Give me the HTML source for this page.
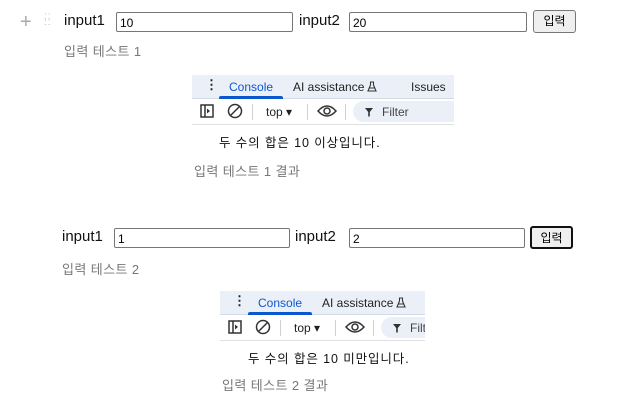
<!DOCTYPE html>
<html><head><meta charset="utf-8"><style>
*{margin:0;padding:0;box-sizing:border-box}
body{width:634px;height:403px;background:#fff;position:relative;overflow:hidden;font-family:"Liberation Sans","Noto Sans CJK KR",sans-serif}
.a{position:absolute;white-space:nowrap}
.lbl{font-size:15px;color:#111}
.inp{position:absolute;border:1px solid #767676;border-radius:2px;height:20px;font-size:12px;padding:3px 3px;color:#000}
.btn{position:absolute;border:1px solid #767676;border-radius:3px;background:#efefef;font-size:12px;text-align:center;line-height:21px;height:23px;width:43px}
.gray{font-size:13px;color:#777;letter-spacing:0.4px}
.dt{position:absolute;overflow:hidden;font-size:12px;color:#1f1f1f}
.tabs{position:absolute;left:0;top:0;right:0;height:24px;background:#ebf0f8;border-bottom:1px solid #d3dbe6}
.tb{position:absolute;left:0;top:24px;right:0;height:26px;border-bottom:1px solid #e0e0e0;background:#fff}
.sep{position:absolute;top:5px;width:1px;height:16px;background:#d0d0d0}
.msg{font-size:12.5px;letter-spacing:0.9px;color:#111}
</style></head><body>
<div class="a" style="left:20px;top:12px;font-size:20px;color:#aaa;line-height:20px">+</div>
<div class="a" style="left:44px;top:14px;font-size:10px;color:#bbb;line-height:6px;letter-spacing:1px">::<br>::</div>

<div class="a lbl" style="left:64px;top:12px">input1</div>
<div class="inp" style="left:116px;top:12px;width:177px">10</div>
<div class="a lbl" style="left:299px;top:12px">input2</div>
<div class="inp" style="left:349px;top:12px;width:178px">20</div>
<div class="btn" style="left:533px;top:10px">입력</div>
<div class="a gray" style="left:64px;top:41px">입력 테스트 1</div>

<div class="dt" style="left:192px;top:75px;width:262px;height:76px">
 <div class="tabs">
  <div class="a" style="left:13px;top:2px;font-weight:bold;font-size:13px">⋮</div>
  <div class="a" style="left:37px;top:5px;color:#0b57d0">Console</div>
  <div class="a" style="left:27px;top:21px;width:64px;height:3px;background:#0b57d0;border-radius:2px 2px 0 0"></div>
  <div class="a" style="left:101px;top:5px">AI assistance</div>
  <svg class="a" style="left:175px;top:6px" width="10" height="11" viewBox="0 0 10 11"><path d="M3 1H7M3.5 1V4L1 10H9L6.5 4V1M2 7H8" fill="none" stroke="#333" stroke-width="1.1"/></svg>
  <div class="a" style="left:219px;top:5px">Issues</div>
 </div>
 <div class="tb">
  <svg class="a" style="left:8px;top:5px" width="14" height="14" viewBox="0 0 14 14"><rect x="1" y="1" width="12" height="12" fill="none" stroke="#333" stroke-width="1.5"/><line x1="5" y1="1" x2="5" y2="13" stroke="#333" stroke-width="1.5"/><path d="M7 4.5L10 7L7 9.5Z" fill="#333"/></svg>
  <svg class="a" style="left:35px;top:4px" width="16" height="16" viewBox="0 0 16 16"><circle cx="8" cy="8" r="6.5" fill="none" stroke="#333" stroke-width="1.5"/><line x1="3.5" y1="12.5" x2="12.5" y2="3.5" stroke="#333" stroke-width="1.5"/></svg>
  <div class="sep" style="left:60px"></div>
  <div class="a" style="left:74px;top:6px">top ▾</div>
  <div class="sep" style="left:115px"></div>
  <svg class="a" style="left:125px;top:5px" width="20" height="14" viewBox="0 0 20 14"><path d="M1 7Q10 -3 19 7Q10 17 1 7Z" fill="none" stroke="#333" stroke-width="1.5"/><circle cx="10" cy="7" r="3" fill="none" stroke="#333" stroke-width="1.5"/></svg>
  <div class="sep" style="left:153px"></div>
  <div class="a" style="left:161px;top:2px;width:110px;height:21px;background:#ebf0f8;border-radius:11px"></div>
  <svg class="a" style="left:172px;top:8px" width="10" height="10" viewBox="0 0 10 10"><path d="M1 1H9L5.8 5V9.5H4.2V5Z" fill="#333"/></svg>
  <div class="a" style="left:190px;top:6px;color:#444">Filter</div>
 </div>
 <div class="a msg" style="left:27px;top:57px">두 수의 합은 10 이상입니다.</div>
</div>
<div class="a gray" style="left:194px;top:161px">입력 테스트 1 결과</div>

<div class="a lbl" style="left:62px;top:228px">input1</div>
<div class="inp" style="left:114px;top:228px;width:176px">1</div>
<div class="a lbl" style="left:295px;top:228px">input2</div>
<div class="inp" style="left:349px;top:228px;width:176px">2</div>
<div class="btn" style="left:530px;top:226px;border:2px solid #111">입력</div>
<div class="a gray" style="left:62px;top:259px">입력 테스트 2</div>

<div class="dt" style="left:220px;top:291px;width:205px;height:76px">
 <div class="tabs">
  <div class="a" style="left:13px;top:2px;font-weight:bold;font-size:13px">⋮</div>
  <div class="a" style="left:38px;top:5px;color:#0b57d0">Console</div>
  <div class="a" style="left:28px;top:21px;width:64px;height:3px;background:#0b57d0;border-radius:2px 2px 0 0"></div>
  <div class="a" style="left:102px;top:5px">AI assistance</div>
  <svg class="a" style="left:176px;top:6px" width="10" height="11" viewBox="0 0 10 11"><path d="M3 1H7M3.5 1V4L1 10H9L6.5 4V1M2 7H8" fill="none" stroke="#333" stroke-width="1.1"/></svg>
 </div>
 <div class="tb">
  <svg class="a" style="left:8px;top:5px" width="14" height="14" viewBox="0 0 14 14"><rect x="1" y="1" width="12" height="12" fill="none" stroke="#333" stroke-width="1.5"/><line x1="5" y1="1" x2="5" y2="13" stroke="#333" stroke-width="1.5"/><path d="M7 4.5L10 7L7 9.5Z" fill="#333"/></svg>
  <svg class="a" style="left:35px;top:4px" width="16" height="16" viewBox="0 0 16 16"><circle cx="8" cy="8" r="6.5" fill="none" stroke="#333" stroke-width="1.5"/><line x1="3.5" y1="12.5" x2="12.5" y2="3.5" stroke="#333" stroke-width="1.5"/></svg>
  <div class="sep" style="left:60px"></div>
  <div class="a" style="left:74px;top:6px">top ▾</div>
  <div class="sep" style="left:115px"></div>
  <svg class="a" style="left:125px;top:5px" width="20" height="14" viewBox="0 0 20 14"><path d="M1 7Q10 -3 19 7Q10 17 1 7Z" fill="none" stroke="#333" stroke-width="1.5"/><circle cx="10" cy="7" r="3" fill="none" stroke="#333" stroke-width="1.5"/></svg>
  <div class="sep" style="left:153px"></div>
  <div class="a" style="left:161px;top:2px;width:110px;height:21px;background:#ebf0f8;border-radius:11px"></div>
  <svg class="a" style="left:172px;top:8px" width="10" height="10" viewBox="0 0 10 10"><path d="M1 1H9L5.8 5V9.5H4.2V5Z" fill="#333"/></svg>
  <div class="a" style="left:190px;top:6px;color:#444">Filter</div>
 </div>
 <div class="a msg" style="left:28px;top:57px">두 수의 합은 10 미만입니다.</div>
</div>
<div class="a gray" style="left:222px;top:375px">입력 테스트 2 결과</div>
</body></html>
